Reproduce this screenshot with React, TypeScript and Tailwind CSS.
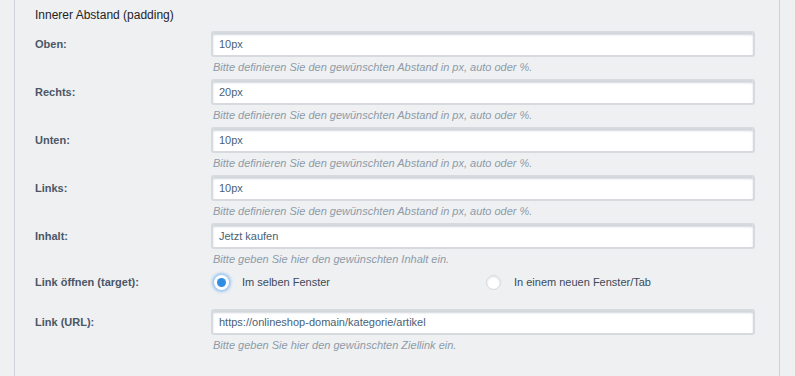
const fields = [
  { label: "Oben:", value: "10px", help: "Bitte definieren Sie den gewünschten Abstand in px, auto oder %." },
  { label: "Rechts:", value: "20px", help: "Bitte definieren Sie den gewünschten Abstand in px, auto oder %." },
  { label: "Unten:", value: "10px", help: "Bitte definieren Sie den gewünschten Abstand in px, auto oder %." },
  { label: "Links:", value: "10px", help: "Bitte definieren Sie den gewünschten Abstand in px, auto oder %." },
  { label: "Inhalt:", value: "Jetzt kaufen", help: "Bitte geben Sie hier den gewünschten Inhalt ein." },
];

const TextInput = ({ value }: { value: string }) => (
  <div className="h-[26px] rounded-[3px] border-2 border-[#d6dade] bg-white shadow-[inset_0_2px_2px_rgba(120,135,150,0.35)] flex items-center px-[6px] text-[11px] text-[#4a6176]">
    {value}
  </div>
);

const Radio = ({ checked, label }: { checked?: boolean; label: string }) => (
  <div className="flex items-center pl-[3px]">
    {checked ? (
      <span className="w-[15px] h-[15px] rounded-full bg-white shadow-[0_0_3px_2px_rgba(80,160,240,0.55)] flex items-center justify-center">
        <span className="w-[9px] h-[9px] rounded-full bg-[#2f8de4]" />
      </span>
    ) : (
      <span className="w-[15px] h-[15px] rounded-full bg-white border border-[#d4d8dd] shadow-[inset_0_1px_2px_rgba(0,0,0,0.12)]" />
    )}
    <span className="ml-[13px] text-[11px] text-[#3c4a58]">{label}</span>
  </div>
);

const Help = ({ children }: { children: string }) => (
  <div className="mt-[3px] leading-[14px] pl-[2px] text-[11px] italic text-[#8d9ba8]">{children}</div>
);

export default function App() {
  return (
    <div className="w-[795px] h-[376px] bg-[#eff0f2] overflow-hidden font-['Liberation_Sans',Arial,sans-serif]">
      <div className="ml-[14px] w-[766px] h-full border-l border-r border-[#cfd3da] pl-[20px] pr-[24px] pt-[7px]">
        <div className="text-[12px] leading-[16px] text-[#1f2326]">Innerer Abstand (padding)</div>
        <div className="mt-[8px] flex flex-col gap-[5px]">
          {fields.map((f) => (
            <div key={f.label} className="grid grid-cols-[176px_1fr]">
              <div className="h-[26px] flex items-center text-[11px] font-bold text-[#4a5766]">{f.label}</div>
              <div>
                <TextInput value={f.value} />
                <Help>{f.help}</Help>
              </div>
            </div>
          ))}
          <div className="grid grid-cols-[176px_1fr] h-[22px] items-center">
            <div className="text-[11px] font-bold text-[#4a5766]">Link öffnen (target):</div>
            <div className="grid grid-cols-2">
              <Radio checked label="Im selben Fenster" />
              <Radio label="In einem neuen Fenster/Tab" />
            </div>
          </div>
          <div className="grid grid-cols-[176px_1fr] mt-[11px]">
            <div className="h-[26px] flex items-center text-[11px] font-bold text-[#4a5766]">Link (URL):</div>
            <div>
              <TextInput value="https://onlineshop-domain/kategorie/artikel" />
              <Help>Bitte geben Sie hier den gewünschten Ziellink ein.</Help>
            </div>
          </div>
        </div>
      </div>
    </div>
  );
}
